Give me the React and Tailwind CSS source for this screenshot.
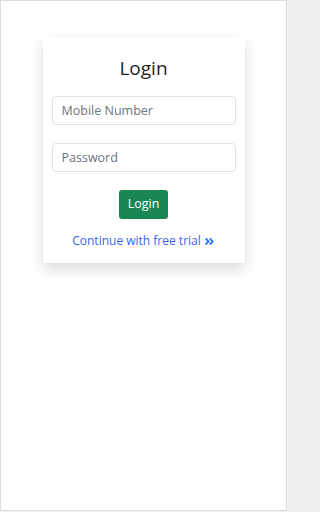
import React from 'react';
import { FaAngleDoubleRight } from 'react-icons/fa';

const font = { fontFamily: '"Open Sans", "Noto Sans", sans-serif' };

const App = () => {
  return (
    <div className="min-h-screen w-full bg-[#f0f0f0]" style={font}>
      <div className="w-[287px] h-[511px] border border-[#dcdcdc] bg-white pt-[36px]">
        <div className="mx-auto w-[202px] bg-white shadow-[0_6px_14px_rgba(0,0,0,0.15)] px-[9px] pt-[19px] pb-[13px]">
          <h1 className="text-center text-[19px] leading-[24px] text-[#212529] font-normal">Login</h1>
          <input
            className="mt-[16px] block w-full h-[29px] rounded-[4px] border border-[#dee2e6] px-[9px] text-[12.5px] text-[#212529] placeholder:text-[#6c757d] outline-none"
            placeholder="Mobile Number"
          />
          <input
            type="password"
            className="mt-[18px] block w-full h-[29px] rounded-[4px] border border-[#dee2e6] px-[9px] text-[12.5px] text-[#212529] placeholder:text-[#6c757d] outline-none"
            placeholder="Password"
          />
          <div className="mt-[18px] flex justify-center">
            <button className="h-[29px] w-[49px] rounded-[3px] bg-[#198754] text-white text-[12.5px]">Login</button>
          </div>
          <div className="mt-[13px] flex items-center justify-center gap-[3px] text-[12px] leading-[18px] text-[#3b63f5]">
            <span>Continue with free trial</span>
            <FaAngleDoubleRight className="text-[#0d6efd] w-[11px] h-[11px]" />
          </div>
        </div>
      </div>
    </div>
  );
};

export default App;
